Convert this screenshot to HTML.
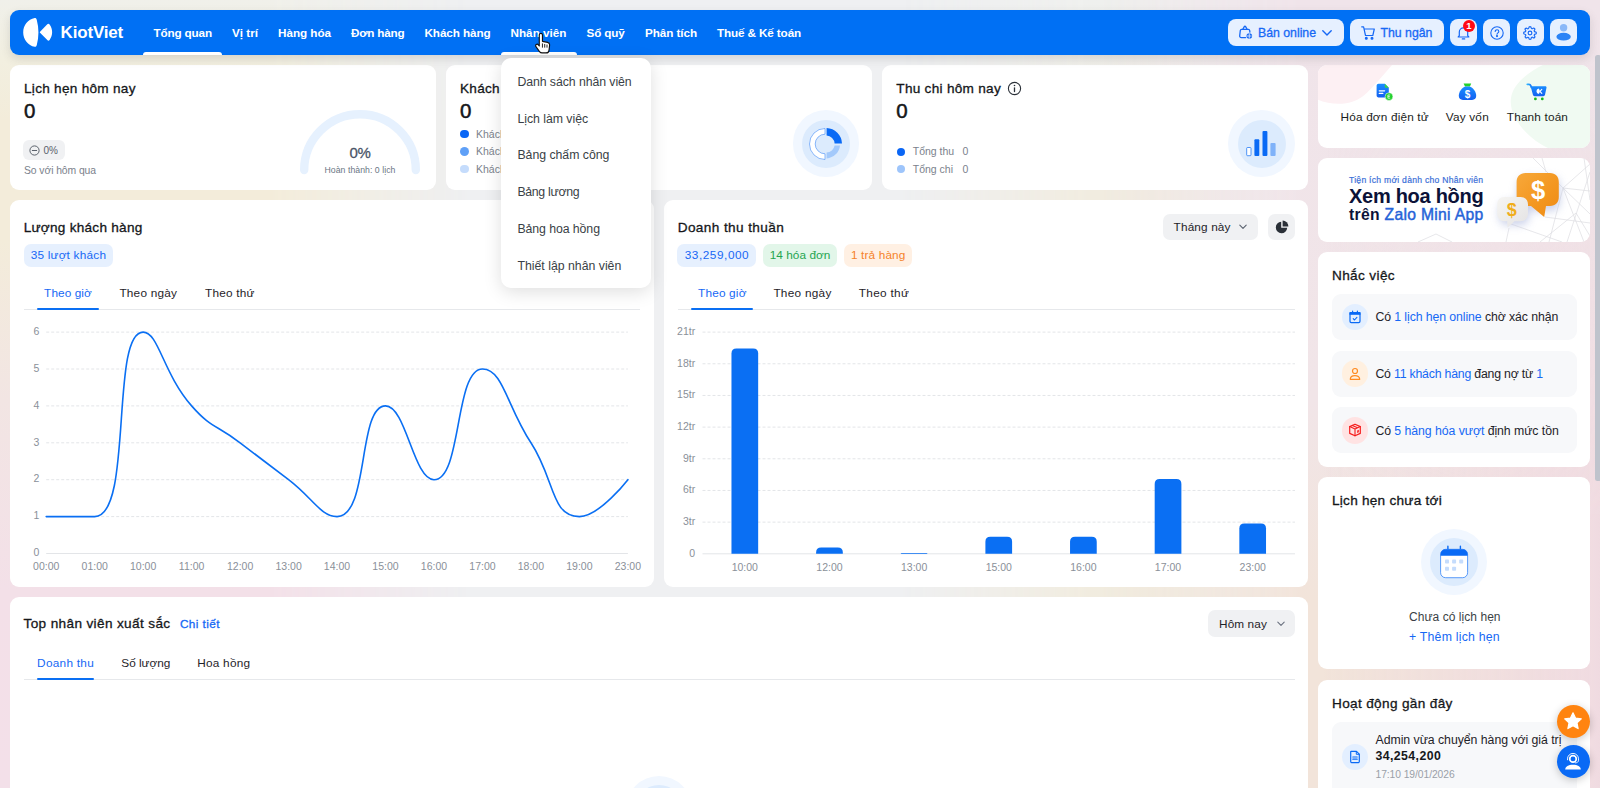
<!DOCTYPE html><html lang="vi"><head>
<meta charset="utf-8">
<title>KiotViet - Tổng quan</title>
<style>
*{box-sizing:border-box;margin:0;padding:0}
html,body{width:1600px;height:788px;overflow:hidden}
body{font-family:"Liberation Sans",sans-serif;color:#15171a;position:relative;
  background:#eff0f2;}

.bgL{position:absolute;left:0;top:0;width:470px;height:788px;background:linear-gradient(180deg,#f0f0ea 0,#f2efe0 60px,#f3ecda 120px,#f3ecda 240px,#f2e5e3 400px,#f3e0e8 590px,#f3e0e9 788px);-webkit-mask-image:linear-gradient(90deg,#000 0,#000 270px,transparent 100%);mask-image:linear-gradient(90deg,#000 0,#000 270px,transparent 100%)}
.bgC{position:absolute;left:900px;top:0;width:420px;height:788px;background:linear-gradient(180deg,#eff0ee 0,#f1ece0 190px,#f1ecdf 788px);-webkit-mask-image:linear-gradient(90deg,transparent 0,#000 45%,#000 60%,transparent 100%);mask-image:linear-gradient(90deg,transparent 0,#000 45%,#000 60%,transparent 100%)}
.bgR{position:absolute;left:1100px;top:0;width:500px;height:788px;background:linear-gradient(180deg,#f0e4ea 0,#f1e5e8 400px,#f2e4da 600px,#f2e4da 788px);-webkit-mask-image:linear-gradient(90deg,transparent 0,#000 200px);mask-image:linear-gradient(90deg,transparent 0,#000 200px)}
.bgP{position:absolute;left:1320px;top:0;width:280px;height:788px;background:linear-gradient(90deg,rgba(240,219,225,0) 0,#f0dbe1 100%);-webkit-mask-image:linear-gradient(180deg,transparent 60px,#000 520px);mask-image:linear-gradient(180deg,transparent 60px,#000 520px)}
.abs{position:absolute}
.card{position:absolute;background:#fff;border-radius:9px}
.t{position:absolute;white-space:nowrap;line-height:1}
.m{-webkit-text-stroke:.3px currentColor}
/* NAV */
#nav{position:absolute;left:10px;top:10px;width:1580px;height:45px;background:#0070f4;border-radius:9px;box-shadow:0 4px 10px rgba(60,60,60,.15)}
#nav .ni{position:absolute;top:0;height:45px;line-height:45px;color:#fff;font-weight:700;font-size:11.7px;white-space:nowrap}
#nav .ul{position:absolute;top:42px;height:3px;background:#fff;border-radius:3px 3px 0 0}
.nb{position:absolute;top:9px;height:27px;background:#e6f0ff;border-radius:8px;color:#1668f5}
/* dropdown */
#dd{position:absolute;left:501px;top:58px;width:150px;height:230px;background:#fff;border-radius:10px;box-shadow:0 4px 18px rgba(0,0,0,.13)}
#dd .t{color:#3a3f46}
.tab{position:absolute;font-size:12.3px;white-space:nowrap;line-height:1}
.pill{position:absolute;height:23px;border-radius:7px;font-size:12.3px;line-height:23px;text-align:center;white-space:nowrap}
.ax{font-size:10.5px;fill:#8a9099;font-family:"Liberation Sans",sans-serif}
</style>
</head>
<body>
<div class="bgL"></div><div class="bgC"></div><div class="bgR"></div><div class="bgP"></div>
<!-- ROW 1 -->
<div class="card" style="left:10px;top:65px;width:426px;height:125px">
<div class="t m" style="top: 17px; font-size: 13.6px; left: 14px; letter-spacing: 0.28px;">Lịch hẹn hôm nay</div>
<div class="t m" style="top:36px;font-size:20.5px;left:14.00px;-webkit-text-stroke:.5px currentColor;">0</div>
<div class="abs" style="left:13.2px;top:75px;width:42px;height:20px;background:#f0f1f3;border-radius:6px;"></div>
<svg class="abs" style="left:19.2px;top:79.6px" width="11" height="11" viewBox="0 0 11 11" fill="none" stroke="#5a616b" stroke-width="1"><circle cx="5.500" cy="5.500" r="4.600"></circle><path d="M3.300 5.500h4.400" stroke-linecap="round"></path></svg>
<div class="t" style="top: 81px; font-size: 10px; left: 33.6px; color: rgb(90, 97, 107); letter-spacing: -0.23px;">0%</div>
<div class="t" style="top: 101px; font-size: 10.4px; left: 14px; color: rgb(123, 130, 140); letter-spacing: -0.09px;">So với hôm qua</div>
<svg class="abs" style="left:280px;top:35px" width="140" height="90" viewBox="290 100 140 90" fill="none"><path d="M304.200 170A55.800 55.800 0 0 1 415.800 170" stroke="#e6f1fe" stroke-width="8.400" stroke-linecap="round"></path></svg>
<div class="t m" style="top: 80px; font-size: 15px; left: 339.5px; color: rgb(74, 85, 104); letter-spacing: -0.34px;">0%</div>
<div class="t" style="top: 101px; font-size: 8.7px; left: 314.5px; color: rgb(107, 118, 132); letter-spacing: 0.05px;">Hoàn thành: 0 lịch</div>
</div>
<div class="card" style="left:446px;top:65px;width:426px;height:125px">
<div class="t m" style="top:17px;font-size:13.6px;left:14.00px;letter-spacing:.28px;">Khách hàng hôm nay</div>
<div class="t m" style="top:36px;font-size:20.5px;left:14.00px;-webkit-text-stroke:.5px currentColor;">0</div>
<div class="abs" style="left:14.3px;top:64.7px;width:8.6px;height:8.6px;background:#0a66f5;border-radius:5px;"></div>
<div class="t" style="top:64px;font-size:10.5px;left:30.00px;color:#7b828c;">Khách mới &nbsp; 0</div>
<div class="abs" style="left:14.3px;top:82.2px;width:8.6px;height:8.6px;background:#5fa0f7;border-radius:5px;"></div>
<div class="t" style="top:81px;font-size:10.5px;left:30.00px;color:#7b828c;">Khách cũ &nbsp; 0</div>
<div class="abs" style="left:14.3px;top:99.7px;width:8.6px;height:8.6px;background:#c5dcfc;border-radius:5px;"></div>
<div class="t" style="top:99px;font-size:10.5px;left:30.00px;color:#7b828c;">Khách vãng lai &nbsp; 0</div>
<div class="abs" style="left:346.5px;top:45.4px;width:66.6px;height:66.6px;background:#f1f7ff;border-radius:40px;"></div>
<div class="abs" style="left:355.8px;top:54.7px;width:48px;height:48px;background:#dcebfd;border-radius:40px;"></div>
<svg class="abs" style="left:359.79999999999995px;top:58.80000000000001px" width="40" height="40" viewBox="-20 -20 40 40"><path d="M-1 -15.500A15.500 15.500 0 0 0 -1 15.500V9.800A9.800 9.800 0 0 1 -1 -9.800Z" fill="#fff" stroke="#3f8af7" stroke-width=".6"></path><path d="M.6 -16A16 16 0 0 1 16 -.6H8.600A8.600 8.600 0 0 0 .6 -8.600Z" fill="#0a6af5"></path><path d="M.6 14.400A14.400 14.400 0 0 0 14 1.400H8.600A8.600 8.600 0 0 1 .6 8.600Z" fill="#a3c9fb"></path></svg>
</div>
<div class="card" style="left:882px;top:65px;width:426px;height:125px">
<div class="t m" style="top: 17px; font-size: 13.6px; left: 14.3px; letter-spacing: 0.28px;">Thu chi hôm nay</div>
<svg class="abs" style="left:125.100px;top:16.300px" width="15" height="15" viewBox="0 0 15 15" fill="none" stroke="#2a3038" stroke-width="1.100"><circle cx="7.500" cy="7.500" r="6.100"></circle><path d="M7.500 6.800v3.800" stroke-linecap="round" stroke-width="1.300"></path><circle cx="7.500" cy="4.500" r=".8" fill="#2a3038" stroke="none"></circle></svg>
<div class="t m" style="top:36px;font-size:20.5px;left:14.30px;-webkit-text-stroke:.5px currentColor;">0</div>
<div class="abs" style="left:14.7px;top:82.50000000000001px;width:8.6px;height:8.6px;background:#0a66f5;border-radius:5px;"></div>
<div class="t" style="top: 81px; font-size: 10.5px; left: 30.8px; color: rgb(123, 130, 140); letter-spacing: -0.03px;">Tổng thu</div>
<div class="t" style="top:81px;font-size:10.5px;left:80.50px;color:#7b828c;">0</div>
<div class="abs" style="left:14.7px;top:99.90000000000002px;width:8.6px;height:8.6px;background:#9ec5fb;border-radius:5px;"></div>
<div class="t" style="top: 99px; font-size: 10.5px; left: 30.8px; color: rgb(123, 130, 140); letter-spacing: -0.01px;">Tổng chi</div>
<div class="t" style="top:99px;font-size:10.5px;left:80.50px;color:#7b828c;">0</div>
<div class="abs" style="left:346.3px;top:45.4px;width:66.6px;height:66.6px;background:#f1f7ff;border-radius:40px;"></div>
<div class="abs" style="left:355.6px;top:54.7px;width:48px;height:48px;background:#dcebfd;border-radius:40px;"></div>
<svg class="abs" style="left:359.6px;top:58.7px" width="40" height="40" viewBox="1241.600 122.900 40 40"><rect x="1246.300" y="146.400" width="4.300" height="8.200" rx=".8" fill="#fff" stroke="#0a6af5" stroke-width=".7"></rect><rect x="1254" y="138.100" width="4.900" height="16.800" rx="1" fill="#0a6af5"></rect><rect x="1262.100" y="130" width="4.900" height="24.900" rx="1" fill="#0a6af5"></rect><rect x="1270" y="142" width="5.200" height="12.900" rx="1" fill="#7fb2f9"></rect></svg>
</div>
<!-- ROW 2 -->
<div class="card" style="left:10px;top:200px;width:644px;height:387px">
<div class="t m" style="top: 21px; font-size: 13.6px; left: 13.65px; letter-spacing: 0.26px;">Lượng khách hàng</div>
<div class="abs" style="left:13.5px;top:43.80000000000001px;width:89.75px;height:23px;background:#e6f0fe;border-radius:7px;"></div>
<div class="t" style="top: 50px; font-size: 11.8px; left: 20.65px; color: rgb(22, 104, 245); letter-spacing: 0.22px;">35 lượt khách</div>
<div class="t" style="top: 88px; font-size: 11.8px; left: 34.1px; color: rgb(22, 104, 245); letter-spacing: 0.09px;">Theo giờ</div>
<div class="t" style="top: 88px; font-size: 11.8px; left: 109.4px; color: rgb(31, 35, 41); letter-spacing: 0.22px;">Theo ngày</div>
<div class="t" style="top: 88px; font-size: 11.8px; left: 195.1px; color: rgb(31, 35, 41); letter-spacing: 0.2px;">Theo thứ</div>
<div class="abs" style="left:13.5px;top:109.30000000000001px;width:616.5px;height:1px;background:#e6e8eb;border-radius:0px;"></div>
<div class="abs" style="left:26.799999999999997px;top:107.80000000000001px;width:62.10000000000001px;height:2.3px;background:#0a6ff3;border-radius:1px;"></div>
<svg class="abs" style="left:0;top:0" width="644" height="387" viewBox="10 200 644 387">
<path d="M46.2 553.5H627.9" stroke="#e3e5e8" stroke-width="1"></path><text class="ax" x="39.400" y="556.2" text-anchor="end">0</text>
<path d="M46.2 516.6H627.9" stroke="#e3e5e8" stroke-width="1" stroke-dasharray="3 2"></path><text class="ax" x="39.400" y="519.3" text-anchor="end">1</text>
<path d="M46.2 479.7H627.9" stroke="#e3e5e8" stroke-width="1" stroke-dasharray="3 2"></path><text class="ax" x="39.400" y="482.4" text-anchor="end">2</text>
<path d="M46.2 442.8H627.9" stroke="#e3e5e8" stroke-width="1" stroke-dasharray="3 2"></path><text class="ax" x="39.400" y="445.5" text-anchor="end">3</text>
<path d="M46.2 405.9H627.9" stroke="#e3e5e8" stroke-width="1" stroke-dasharray="3 2"></path><text class="ax" x="39.400" y="408.6" text-anchor="end">4</text>
<path d="M46.2 369.0H627.9" stroke="#e3e5e8" stroke-width="1" stroke-dasharray="3 2"></path><text class="ax" x="39.400" y="371.7" text-anchor="end">5</text>
<path d="M46.2 332.1H627.9" stroke="#e3e5e8" stroke-width="1" stroke-dasharray="3 2"></path><text class="ax" x="39.400" y="334.8" text-anchor="end">6</text>
<text class="ax" x="46.2" y="570.200" text-anchor="middle">00:00</text><text class="ax" x="94.7" y="570.200" text-anchor="middle">01:00</text><text class="ax" x="143.1" y="570.200" text-anchor="middle">10:00</text><text class="ax" x="191.6" y="570.200" text-anchor="middle">11:00</text><text class="ax" x="240.1" y="570.200" text-anchor="middle">12:00</text><text class="ax" x="288.6" y="570.200" text-anchor="middle">13:00</text><text class="ax" x="337.0" y="570.200" text-anchor="middle">14:00</text><text class="ax" x="385.5" y="570.200" text-anchor="middle">15:00</text><text class="ax" x="434.0" y="570.200" text-anchor="middle">16:00</text><text class="ax" x="482.5" y="570.200" text-anchor="middle">17:00</text><text class="ax" x="530.9" y="570.200" text-anchor="middle">18:00</text><text class="ax" x="579.4" y="570.200" text-anchor="middle">19:00</text><text class="ax" x="627.9" y="570.200" text-anchor="middle">23:00</text>
<path d="M46.20 516.60C46.20 516.60 84.85 516.60 94.67 516.60C133.33 516.60 110.01 332.10 143.15 332.10C158.49 332.10 162.94 373.15 191.62 405.90C211.42 428.50 215.86 424.35 240.10 442.80C264.34 461.25 264.34 461.25 288.57 479.70C312.81 498.15 320.80 516.60 337.05 516.60C369.28 516.60 357.52 405.90 385.52 405.90C405.99 405.90 413.53 479.70 434.00 479.70C462.01 479.70 454.47 369.00 482.47 369.00C502.94 369.00 506.71 405.90 530.95 442.80C555.19 479.70 550.74 516.60 579.42 516.60C599.22 516.60 627.90 479.70 627.90 479.70" fill="none" stroke="#0a6ff3" stroke-width="1.600" stroke-linecap="round"></path>
</svg>
</div>
<div class="card" style="left:664px;top:200px;width:644px;height:387px">
<div class="t m" style="top: 21px; font-size: 13.6px; left: 13.7px; letter-spacing: 0.4px;">Doanh thu thuần</div>
<div class="abs" style="left:13.299999999999955px;top:43.80000000000001px;width:78.4px;height:23px;background:#e6f0fe;border-radius:7px;"></div>
<div class="t" style="top: 50px; font-size: 11.8px; left: 20.75px; color: rgb(22, 104, 245); letter-spacing: 0.54px;">33,259,000</div>
<div class="abs" style="left:98.70000000000005px;top:43.80000000000001px;width:74.7px;height:23px;background:#e2f6e9;border-radius:7px;"></div>
<div class="t" style="top: 50px; font-size: 11.8px; left: 105.7px; color: rgb(31, 165, 80); letter-spacing: 0.05px;">14 hóa đơn</div>
<div class="abs" style="left:180.39999999999998px;top:43.80000000000001px;width:67.6px;height:23px;background:#fff0e3;border-radius:7px;"></div>
<div class="t" style="top: 50px; font-size: 11.8px; left: 187px; color: rgb(245, 130, 42); letter-spacing: 0.14px;">1 trả hàng</div>
<div class="abs" style="left:498.5px;top:13.599999999999994px;width:95.7px;height:26.3px;background:#f0f1f3;border-radius:7px;"></div>
<div class="t" style="top: 22px; font-size: 11.8px; left: 509.6px; color: rgb(31, 35, 41); letter-spacing: 0.14px;">Tháng này</div>
<svg class="abs" style="left:574.7px;top:24.3px" width="8" height="6" viewBox="0 0 8 6" fill="none" stroke="#5b6370" stroke-width="1.100" stroke-linecap="round" stroke-linejoin="round"><path d="M.8 1.200L4 4.400 7.200 1.200"></path></svg>
<div class="abs" style="left:604.2px;top:13.599999999999994px;width:26.7px;height:26.3px;background:#f0f1f3;border-radius:7px;"></div>
<svg class="abs" style="left:610.7px;top:19.9px" width="14" height="14" viewBox="0 0 14 14" fill="#2a3038"><path d="M6.200 1.800A5.700 5.700 0 1 0 12.200 7.800H6.200Z"></path><path d="M7.600.6A5.800 5.800 0 0 1 13.400 6.400H7.600Z"></path></svg>
<div class="t" style="top: 88px; font-size: 11.8px; left: 34px; color: rgb(22, 104, 245); letter-spacing: 0.19px;">Theo giờ</div>
<div class="t" style="top: 88px; font-size: 11.8px; left: 109.4px; color: rgb(31, 35, 41); letter-spacing: 0.27px;">Theo ngày</div>
<div class="t" style="top: 88px; font-size: 11.8px; left: 194.8px; color: rgb(31, 35, 41); letter-spacing: 0.31px;">Theo thứ</div>
<div class="abs" style="left:13.5px;top:109.30000000000001px;width:617.5px;height:1px;background:#e6e8eb;border-radius:0px;"></div>
<div class="abs" style="left:27px;top:107.80000000000001px;width:62.200000000000045px;height:2.3px;background:#0a6ff3;border-radius:1px;"></div>
<svg class="abs" style="left:0;top:0" width="644" height="387" viewBox="664 200 644 387">
<path d="M702.5 553.8H1295" stroke="#e3e5e8" stroke-width="1"></path><text class="ax" x="695.200" y="556.7" text-anchor="end">0</text>
<path d="M702.5 522.13H1295" stroke="#e3e5e8" stroke-width="1" stroke-dasharray="3 2"></path><text class="ax" x="695.200" y="525.0" text-anchor="end">3tr</text>
<path d="M702.5 490.4599999999999H1295" stroke="#e3e5e8" stroke-width="1" stroke-dasharray="3 2"></path><text class="ax" x="695.200" y="493.4" text-anchor="end">6tr</text>
<path d="M702.5 458.78999999999996H1295" stroke="#e3e5e8" stroke-width="1" stroke-dasharray="3 2"></path><text class="ax" x="695.200" y="461.7" text-anchor="end">9tr</text>
<path d="M702.5 427.11999999999995H1295" stroke="#e3e5e8" stroke-width="1" stroke-dasharray="3 2"></path><text class="ax" x="695.200" y="430.0" text-anchor="end">12tr</text>
<path d="M702.5 395.44999999999993H1295" stroke="#e3e5e8" stroke-width="1" stroke-dasharray="3 2"></path><text class="ax" x="695.200" y="398.3" text-anchor="end">15tr</text>
<path d="M702.5 363.78H1295" stroke="#e3e5e8" stroke-width="1" stroke-dasharray="3 2"></path><text class="ax" x="695.200" y="366.7" text-anchor="end">18tr</text>
<path d="M702.5 332.10999999999996H1295" stroke="#e3e5e8" stroke-width="1" stroke-dasharray="3 2"></path><text class="ax" x="695.200" y="335.0" text-anchor="end">21tr</text>
<path d="M731.47 553.8V353.60Q731.47 348.60 736.47 348.60H753.17Q758.17 348.60 758.17 353.60V553.8Z" fill="#0a6ff3"></path><text class="ax" x="744.8" y="570.600" text-anchor="middle">10:00</text>
<path d="M816.11 553.8V552.40Q816.11 547.40 821.11 547.40H837.81Q842.81 547.40 842.81 552.40V553.8Z" fill="#0a6ff3"></path><text class="ax" x="829.5" y="570.600" text-anchor="middle">12:00</text>
<path d="M900.76 553.8V553.80Q900.76 553.00 901.56 553.00H926.66Q927.46 553.00 927.46 553.80V553.8Z" fill="#0a6ff3"></path><text class="ax" x="914.1" y="570.600" text-anchor="middle">13:00</text>
<path d="M985.40 553.8V541.70Q985.40 536.70 990.40 536.70H1007.10Q1012.10 536.70 1012.10 541.70V553.8Z" fill="#0a6ff3"></path><text class="ax" x="998.8" y="570.600" text-anchor="middle">15:00</text>
<path d="M1070.04 553.8V541.70Q1070.04 536.70 1075.04 536.70H1091.74Q1096.74 536.70 1096.74 541.70V553.8Z" fill="#0a6ff3"></path><text class="ax" x="1083.4" y="570.600" text-anchor="middle">16:00</text>
<path d="M1154.69 553.8V483.90Q1154.69 478.90 1159.69 478.90H1176.39Q1181.39 478.90 1181.39 483.90V553.8Z" fill="#0a6ff3"></path><text class="ax" x="1168.0" y="570.600" text-anchor="middle">17:00</text>
<path d="M1239.33 553.8V528.50Q1239.33 523.50 1244.33 523.50H1261.03Q1266.03 523.50 1266.03 528.50V553.8Z" fill="#0a6ff3"></path><text class="ax" x="1252.7" y="570.600" text-anchor="middle">23:00</text>
</svg>
</div>
<!-- ROW 3 -->
<div class="card" style="left:10px;top:597px;width:1298px;height:191px;border-radius:9px 9px 0 0;overflow:hidden">
<div class="t m" style="top: 20px; font-size: 13.6px; left: 13.5px; letter-spacing: 0.36px;">Top nhân viên xuất sắc</div>
<div class="t m" style="top: 22px; font-size: 11.8px; left: 169.9px; color: rgb(22, 104, 245); letter-spacing: 0.41px;">Chi tiết</div>
<div class="abs" style="left:1198.3px;top:13.299999999999955px;width:86.7px;height:26.4px;background:#f0f1f3;border-radius:7px;"></div>
<div class="t" style="top: 22px; font-size: 11.8px; left: 1209px; color: rgb(31, 35, 41); letter-spacing: 0.11px;">Hôm nay</div>
<svg class="abs" style="left:1267.2px;top:24.1px" width="8" height="6" viewBox="0 0 8 6" fill="none" stroke="#6b7280" stroke-width="1.100" stroke-linecap="round" stroke-linejoin="round"><path d="M.8 1.200L4 4.400 7.200 1.200"></path></svg>
<div class="t" style="top: 61px; font-size: 11.8px; left: 27.1px; color: rgb(22, 104, 245); letter-spacing: 0.28px;">Doanh thu</div>
<div class="t" style="top: 61px; font-size: 11.8px; left: 111.3px; color: rgb(31, 35, 41); letter-spacing: -0.01px;">Số lượng</div>
<div class="t" style="top: 61px; font-size: 11.8px; left: 187.2px; color: rgb(31, 35, 41); letter-spacing: 0.25px;">Hoa hồng</div>
<div class="abs" style="left:13.5px;top:82.29999999999995px;width:1271.5px;height:1px;background:#e6e8eb;border-radius:0px;"></div>
<div class="abs" style="left:27px;top:80.79999999999995px;width:57px;height:2.3px;background:#0a6ff3;border-radius:1px;"></div>
<div class="abs" style="left:615.7px;top:178.7px;width:66.6px;height:66.6px;background:#f1f7ff;border-radius:40px;"></div>
<div class="abs" style="left:625px;top:188px;width:48px;height:48px;background:#dcebfd;border-radius:40px;"></div>
</div>
<!-- SIDEBAR -->
<div class="card" style="left:1318px;top:65px;width:272px;height:83px;overflow:hidden">
<svg class="abs" style="left:0;top:0" width="272" height="83" viewBox="1318 65 272 83"><path d="M1318 65H1392C1384 74 1376 84 1367 92.700C1360 99 1354 102 1346 103.200C1338 104.500 1326 103.500 1318 99.700Z" fill="#fdf0f3"></path><path d="M1590 65V148H1548C1530 140 1508 118 1511 98C1513 84 1528 72 1543 65Z" fill="#f0faf2"></path></svg>
<svg class="abs" style="left:56.5px;top:16.8px" width="20" height="20" viewBox="0 0 20 20"><defs><linearGradient id="gb" x1="0" y1="0" x2="0" y2="1"><stop offset="0" stop-color="#1a8cff"></stop><stop offset="1" stop-color="#1461f0"></stop></linearGradient></defs><path d="M3.500 1.800H9.800L13.800 5.800V13.500C13.800 14.600 13 15.400 11.900 15.400H3.500C2.400 15.400 1.600 14.600 1.600 13.500V3.700C1.600 2.600 2.400 1.800 3.500 1.800Z" fill="url(#gb)"></path><path d="M9.800 1.800L13.800 5.800H10.800C10.200 5.800 9.800 5.400 9.800 4.800Z" fill="#37d24a"></path><path d="M4.300 8.800H9.600M4.300 11.400H7.800" stroke="#fff" stroke-width="1.300" stroke-linecap="round"></path><circle cx="14" cy="14.600" r="3.900" fill="#22d02c" stroke="#fff" stroke-width=".5"></circle><path d="M12.900 13h2.300M12.900 14.600h2M12.900 16.200h2.300M12.900 13v3.200" stroke="#fff" stroke-width=".7" fill="none"></path></svg>
<div class="t" style="top: 47px; font-size: 11.8px; left: 22.6px; color: rgb(26, 29, 33); letter-spacing: 0.16px;">Hóa đơn điện tử</div>
<svg class="abs" style="left:140px;top:17px" width="20" height="20" viewBox="0 0 20 20"><path d="M5.600 1.500H13.200L11.900 4.600H7Z" fill="#22d02c"></path><path d="M7.300 4.500H11.700C14.800 5.500 18.200 9.600 18.200 13.800C18.200 16.500 16.700 17.900 14.100 17.900H4.900C2.300 17.900 .8 16.500 .8 13.800C.8 9.600 4.200 5.500 7.300 4.500Z" fill="url(#gb)"></path><text x="9.500" y="15.800" font-size="10" font-weight="700" fill="#fff" text-anchor="middle" font-family="Liberation Sans, sans-serif">$</text></svg>
<div class="t" style="top: 47px; font-size: 11.8px; left: 127.7px; color: rgb(26, 29, 33); letter-spacing: 0.21px;">Vay vốn</div>
<svg class="abs" style="left:208px;top:17px" width="22" height="20" viewBox="0 0 22 20"><defs><linearGradient id="gh" x1="0" y1="0" x2="1" y2="0"><stop offset="0" stop-color="#2fb4ff"></stop><stop offset="1" stop-color="#1a74f5"></stop></linearGradient></defs><path d="M1.300 2.300H2.900C3.900 2.300 4.500 2.800 4.800 3.700L5.400 5.500" stroke="url(#gh)" stroke-width="1.800" fill="none" stroke-linecap="round"></path><path d="M4.600 4.200H19.200C20.200 4.200 20.700 4.900 20.500 5.800L19 12.800C18.800 13.700 18.200 14.200 17.300 14.200H8.600C7.700 14.200 7.100 13.700 6.900 12.800Z" fill="url(#gb)"></path><path d="M12.600 6.500A2.900 2.900 0 0 0 12.600 12.100A4.200 4.200 0 0 0 12.600 6.500Z" fill="#fff"></path><path d="M15.800 7.300L13.900 9.300L15.800 11.300" stroke="#fff" stroke-width="1.100" fill="none" stroke-linecap="round" stroke-linejoin="round"></path><circle cx="9.400" cy="16.900" r="1.400" fill="#14b81e"></circle><circle cx="16.300" cy="16.900" r="1.400" fill="#14b81e"></circle></svg>
<div class="t" style="top: 47px; font-size: 11.8px; left: 188.8px; color: rgb(26, 29, 33); letter-spacing: 0.16px;">Thanh toán</div>
</div>
<div class="card" style="left:1318px;top:158px;width:272px;height:84px;overflow:hidden">
<svg class="abs" style="left:0;top:0" width="272" height="84" viewBox="1318 158 272 84"><defs><linearGradient id="og" x1="0" y1="0" x2="1" y2="1"><stop offset="0" stop-color="#f7a83a"></stop><stop offset=".6" stop-color="#f3961f"></stop><stop offset="1" stop-color="#ee8a14"></stop></linearGradient><linearGradient id="wg" x1="0" y1="0" x2="1" y2="1"><stop offset="0" stop-color="#f6f5f2"></stop><stop offset="1" stop-color="#e4e3e4"></stop></linearGradient><filter id="bsh" x="-40%" y="-40%" width="180%" height="180%"><feGaussianBlur stdDeviation="4.500"></feGaussianBlur></filter></defs><path d="M1533 158L1563 188L1590 214" stroke="#dcdde1" stroke-width=".7" fill="none"></path><path d="M1590 164L1563 188L1549 242" stroke="#dcdde1" stroke-width=".7" fill="none"></path><path d="M1563 188L1590 191" stroke="#dcdde1" stroke-width=".7" fill="none"></path><path d="M1563 188L1584 242" stroke="#dcdde1" stroke-width=".7" fill="none"></path><path d="M1542 158L1546 172" stroke="#dcdde1" stroke-width=".7" fill="none"></path><path d="M1511 224L1562 242" stroke="#dcdde1" stroke-width=".7" fill="none"></path><path d="M1545 217L1590 223" stroke="#dcdde1" stroke-width=".7" fill="none"></path><path d="M1590 172L1567 242" stroke="#dcdde1" stroke-width=".7" fill="none"></path><path d="M1540 242L1576 213L1590 236" stroke="#dcdde1" stroke-width=".7" fill="none"></path><path d="M1509 228L1506 242" stroke="#dcdde1" stroke-width=".7" fill="none"></path><path d="M1584 158L1590 200" stroke="#dcdde1" stroke-width=".7" fill="none"></path><path d="M1418 242L1436 234L1452 242" stroke="#dcdde1" stroke-width=".7" fill="none"></path><g filter="url(#bsh)" opacity=".75"><rect x="1518" y="177" width="42" height="34" rx="9" fill="#b9c2e3"></rect><rect x="1499" y="201" width="30" height="24" rx="8" fill="#b9c2e3"></rect></g><path d="M1525.500 173H1550C1555.500 173 1558.800 176.500 1558.800 182V197C1558.800 202.500 1555.500 206 1550 206H1546L1544.200 217L1531 206H1525.500C1520 206 1516.600 202.500 1516.600 197V182C1516.600 176.500 1520 173 1525.500 173Z" fill="url(#og)"></path><text x="1538.200" y="198.500" font-size="25.500" font-weight="700" fill="#fff" text-anchor="middle" font-family="Liberation Sans, sans-serif">$</text><path d="M1504.500 197H1520.500C1525 197 1528 200 1528 204.500V213.500C1528 218 1525 221.200 1520.500 221.200H1514.500L1507.600 227.500L1507.200 221.200H1504.500C1500 221.200 1497.200 218 1497.200 213.500V204.500C1497.200 200 1500 197 1504.500 197Z" fill="url(#wg)"></path><text x="1511.700" y="216.300" font-size="18" font-weight="700" fill="#f0ae1c" text-anchor="middle" font-family="Liberation Sans, sans-serif">$</text></svg>
<div class="t" style="top: 18px; font-size: 8.6px; left: 31px; color: rgb(59, 111, 216); -webkit-text-stroke: 0.2px rgb(59, 111, 216); letter-spacing: 0.26px;">Tiện ích mới dành cho Nhân viên</div>
<div class="t" style="top: 28px; font-size: 20px; left: 31px; color: rgb(11, 18, 56); font-weight: 700; letter-spacing: -0.28px;">Xem hoa hồng</div>
<div class="t" style="top: 49px; font-size: 15.7px; left: 31px; color: rgb(11, 18, 56); font-weight: 700; letter-spacing: 0.3px;">trên <span style="color:#2563d8;font-weight:400;-webkit-text-stroke:.45px #2563d8">Zalo Mini App</span></div>
</div>
<div class="card" style="left:1318px;top:252px;width:272px;height:214.500px">
<div class="t m" style="top: 17px; font-size: 13.6px; left: 14px; letter-spacing: 0.37px;">Nhắc việc</div>
<div class="abs" style="left:14.200000000000045px;top:42px;width:244.4px;height:46px;background:#f7f8fa;border-radius:9px;"></div>
<div class="abs" style="left:23.5px;top:51.69999999999999px;width:26.6px;height:26.6px;background:#e3efff;border-radius:14px;"></div>
<svg class="abs" style="left:28.8px;top:57.0px" width="16" height="16" viewBox="0 0 16 16" fill="none" stroke-linecap="round" stroke-linejoin="round"><rect x="3" y="3.600" width="10" height="10" rx="1.300" stroke="#0a6af5" stroke-width="1.200"></rect><path d="M3 3.600H13V5.200H3Z" fill="#0a6af5" stroke="#0a6af5" stroke-width="1.200"></path><path d="M5.600 2.200V4M10.400 2.200V4" stroke="#0a6af5" stroke-width="1.200"></path><path d="M6.200 9.700L7.500 11L9.900 8.400" stroke="#0a6af5" stroke-width="1.100"></path></svg>
<div class="t" style="top: 59px; font-size: 12.3px; left: 57.4px; color: rgb(31, 35, 41); letter-spacing: -0.09px;">Có <span style="color:#1668f5">1 lịch hẹn online</span> chờ xác nhận</div>
<div class="abs" style="left:14.200000000000045px;top:98.5px;width:244.4px;height:46px;background:#f7f8fa;border-radius:9px;"></div>
<div class="abs" style="left:23.5px;top:108.19999999999999px;width:26.6px;height:26.6px;background:#fff0e0;border-radius:14px;"></div>
<svg class="abs" style="left:28.8px;top:113.5px" width="16" height="16" viewBox="0 0 16 16" fill="none" stroke-linecap="round" stroke-linejoin="round"><circle cx="8" cy="5" r="2.500" stroke="#ff8a1f" stroke-width="1.200"></circle><path d="M3.300 13.300C3.300 10.900 5.300 9.600 8 9.600S12.700 10.900 12.700 13.300Z" stroke="#ff8a1f" stroke-width="1.200"></path></svg>
<div class="t" style="top: 116px; font-size: 12.3px; left: 57.4px; color: rgb(31, 35, 41); letter-spacing: -0.2px;">Có <span style="color:#1668f5">11 khách hàng</span> đang nợ từ <span style="color:#1668f5">1</span></div>
<div class="abs" style="left:14.200000000000045px;top:155.3px;width:244.4px;height:46px;background:#f7f8fa;border-radius:9px;"></div>
<div class="abs" style="left:23.5px;top:165.0px;width:26.6px;height:26.6px;background:#ffe3e3;border-radius:14px;"></div>
<svg class="abs" style="left:28.8px;top:170.3px" width="16" height="16" viewBox="0 0 16 16" fill="none" stroke-linecap="round" stroke-linejoin="round"><path d="M8 2.200L13.300 4.600V11.400L8 13.800L2.700 11.400V4.600Z" stroke="#f51d1d" stroke-width="1.200"></path><path d="M2.700 4.600L8 7L13.300 4.600M8 7V13.800M5.300 3.400L10.600 5.800" stroke="#f51d1d" stroke-width="1.100"></path><path d="M10.200 8.500L11.800 7.800V10.200L10.200 10.900Z" fill="#f51d1d" stroke="none"></path></svg>
<div class="t" style="top: 173px; font-size: 12.3px; left: 57.4px; color: rgb(31, 35, 41); letter-spacing: -0.06px;">Có <span style="color:#1668f5">5 hàng hóa vượt</span> định mức tồn</div>
</div>
<div class="card" style="left:1318px;top:477px;width:272px;height:192.400px">
<div class="t m" style="top: 17px; font-size: 13.6px; left: 14px; letter-spacing: 0.25px;">Lịch hẹn chưa tới</div>
<div class="abs" style="left:102.7px;top:51.7px;width:66.6px;height:66.6px;background:#f1f7ff;border-radius:40px;"></div>
<div class="abs" style="left:112px;top:61px;width:48px;height:48px;background:#dcebfd;border-radius:40px;"></div>
<svg class="abs" style="left:116px;top:65.0px" width="40" height="40" viewBox="1434 542 40 40"><path d="M1447.900 546.300V550M1460.400 546.300V550" stroke="#0a6af5" stroke-width="1.400" stroke-linecap="round"></path><rect x="1440.600" y="549.300" width="27" height="28.400" rx="5" fill="#fff" stroke="#1a74f6" stroke-width=".7"></rect><path d="M1440.600 555.700V554.300A5 5 0 0 1 1445.600 549.300H1462.600A5 5 0 0 1 1467.600 554.300V555.700Z" fill="#0a6af5"></path><rect x="1445.0" y="559.6" width="4" height="4" rx=".8" fill="#c5dcfc"></rect><rect x="1452.1" y="559.6" width="4" height="4" rx=".8" fill="#c5dcfc"></rect><rect x="1459.2" y="559.6" width="4" height="4" rx=".8" fill="#c5dcfc"></rect><rect x="1445.0" y="566.8" width="4" height="4" rx=".8" fill="#c5dcfc"></rect><rect x="1452.1" y="566.8" width="4" height="4" rx=".8" fill="#c5dcfc"></rect></svg>
<div class="t" style="top: 134px; font-size: 12px; left: 91.05px; color: rgb(58, 63, 69); letter-spacing: 0.05px;">Chưa có lịch hẹn</div>
<div class="t" style="top: 154px; font-size: 12.3px; left: 91.05px; color: rgb(22, 104, 245); letter-spacing: 0.21px;">+ Thêm lịch hẹn</div>
</div>
<div class="card" style="left:1318px;top:680px;width:272px;height:108px;border-radius:9px 9px 0 0;overflow:hidden">
<div class="t m" style="top: 17px; font-size: 13.6px; left: 14px; letter-spacing: 0.34px;">Hoạt động gần đây</div>
<div class="abs" style="left:14.200000000000045px;top:41.5px;width:244.4px;height:80px;background:#f7f8fa;border-radius:9px;"></div>
<div class="abs" style="left:24px;top:63.5px;width:26px;height:26px;background:#e3efff;border-radius:13px;"></div>
<svg class="abs" style="left:29.0px;top:68.5px" width="16" height="16" viewBox="0 0 16 16" fill="none" stroke-linecap="round" stroke-linejoin="round"><path d="M4 2.300H9.500L12.300 5.100V12.600C12.300 13.200 11.900 13.700 11.300 13.700H4.700C4.100 13.700 3.700 13.200 3.700 12.600V2.600Z" stroke="#0a6af5" stroke-width="1.200"></path><path d="M5.800 8H10.200M5.800 10.200H10.200" stroke="#0a6af5" stroke-width="1.200"></path><path d="M9.300 2.500V5.300H12" stroke="#0a6af5" stroke-width="1"></path></svg>
<div class="t" style="top: 54px; font-size: 12.3px; left: 57.5px; color: rgb(31, 35, 41); letter-spacing: -0.04px;">Admin vừa chuyển hàng với giá trị</div>
<div class="t" style="top: 70px; font-size: 12.3px; left: 57.5px; color: rgb(21, 23, 26); font-weight: 700; letter-spacing: 0.41px;">34,254,200</div>
<div class="t" style="top: 90px; font-size: 10.3px; left: 57.5px; color: rgb(154, 160, 168); letter-spacing: -0.07px;">17:10 19/01/2026</div>
</div>
<!-- NAVBAR -->
<div id="nav">
<svg class="abs" style="left:0;top:0" width="60" height="45" viewBox="10 10 60 45"><path fill="#fff" d="M34.7 18.1C28 19.5 23.2 25.5 23.2 32.4c0 7 4.8 12.9 11.5 14.4 1 .1 1.700-.4 2.100-1.800 2.200-8 2.200-17 0-25-.4-1.400-1.100-2-2.100-1.900z"></path><path fill="#fff" d="M40.300 31.400l7-7.100c.8-.8 1.700-.7 2.300.2 3.400 4.700 3.400 10.700 0 15.400-.6.900-1.500 1-2.300.2l-7-7c-.6-.6-.6-1.100 0-1.700z"></path></svg>
<div class="t" id="brand" style="left: 50.6px; top: 14.1px; font-size: 17px; font-weight: 700; color: rgb(255, 255, 255); letter-spacing: -0.19px;">KiotViet</div>
<div class="ni" style="left: 143.5px; letter-spacing: -0.14px;">Tổng quan</div>
<div class="ni" style="left: 222px; letter-spacing: 0px;">Vị trí</div>
<div class="ni" style="left: 268px; letter-spacing: -0.03px;">Hàng hóa</div>
<div class="ni" style="left: 341px; letter-spacing: -0.2px;">Đơn hàng</div>
<div class="ni" style="left: 414.5px; letter-spacing: -0.09px;">Khách hàng</div>
<div class="ni" style="left: 500.5px; letter-spacing: 0.02px;">Nhân viên</div>
<div class="ni" style="left: 576.5px; letter-spacing: -0.16px;">Sổ quỹ</div>
<div class="ni" style="left: 635px; letter-spacing: -0.07px;">Phân tích</div>
<div class="ni" style="left: 707px; letter-spacing: -0.12px;">Thuế &amp; Kế toán</div>
<div class="ul" style="left:133px;width:79px"></div>
<div class="ul" style="left:491px;width:76px"></div>
<div class="nb" style="left:1218px;width:116px">
<svg class="abs" style="left:10px;top:6px" width="16" height="15" viewBox="0 0 16 15" fill="none" stroke="#1668f5" stroke-width="1.3" stroke-linecap="round" stroke-linejoin="round"><path d="M7.6 12.600H3.300c-1 0-1.700-.8-1.600-1.800l.6-5.300c.1-.7.600-1.100 1.300-1.100h6.800c.7 0 1.200.4 1.300 1.100l.2 1.700"></path><path d="M4.800 4.300l1.500-2.700c.3-.5 1-.5 1.300 0l1.500 2.700"></path><circle cx="11.300" cy="11" r="2.800" fill="#1668f5" stroke="none"></circle><path d="M11.300 8.800v4.400M9.300 11h4" stroke="#e6f0ff" stroke-width=".8"></path></svg>
<div class="t m" style="left: 30px; top: 7.8px; font-size: 12.3px; letter-spacing: -0.01px;">Bán online</div>
<svg class="abs" style="left:94px;top:10.500px" width="10" height="6" viewBox="0 0 10 6" fill="none" stroke="#1668f5" stroke-width="1.400" stroke-linecap="round" stroke-linejoin="round"><path d="M.8.800L5 5 9.200.8"></path></svg>
</div>
<div class="nb" style="left:1340px;width:93.500px">
<svg class="abs" style="left:10.500px;top:6.500px" width="15" height="14" viewBox="0 0 15 14" fill="none" stroke="#1668f5" stroke-width="1.200" stroke-linecap="round" stroke-linejoin="round"><path d="M.7.800h1.900l1.900 8.700h7.300l1.500-6.500H3.200"></path><circle cx="5.300" cy="12.300" r=".9" fill="#1668f5"></circle><circle cx="11" cy="12.300" r=".9" fill="#1668f5"></circle></svg>
<div class="t m" style="left: 30.5px; top: 7.8px; font-size: 12.3px; letter-spacing: 0px;">Thu ngân</div>
</div>
<div class="nb" style="left:1440px;width:27px">
<svg class="abs" style="left:7px;top:7px" width="13" height="14" viewBox="0 0 13 14" fill="none" stroke="#1668f5" stroke-width="1.200" stroke-linecap="round" stroke-linejoin="round"><path d="M2.300 9.700V6.100c0-2.400 1.800-4.300 4.200-4.300s4.200 1.900 4.200 4.300v3.600l1.100 1.300H1.200z"></path><path d="M5.300 12.900h2.400"></path></svg>
<div class="abs" style="left:13px;top:1px;width:12px;height:12px;border-radius:50%;background:#ff0a14;color:#fff;font-size:9.500px;font-weight:700;line-height:12px;text-align:center">1</div>
</div>
<div class="nb" style="left:1473px;width:27px">
<svg class="abs" style="left:6.500px;top:6.500px" width="14" height="14" viewBox="0 0 14 14" fill="none" stroke="#1668f5" stroke-width="1.100" stroke-linecap="round" stroke-linejoin="round"><circle cx="7" cy="7" r="6.200"></circle><path d="M5.200 5.500c0-1 .8-1.700 1.800-1.700s1.800.7 1.800 1.700c0 1.300-1.800 1.400-1.800 2.700"></path><circle cx="7" cy="10.100" r=".5" fill="#1668f5"></circle></svg>
</div>
<div class="nb" style="left:1506.500px;width:27px">
<svg class="abs" style="left:6.500px;top:6.500px" width="14" height="14" viewBox="0 0 24 24" fill="none" stroke="#1668f5" stroke-width="2" stroke-linecap="round" stroke-linejoin="round"><circle cx="12" cy="12" r="3.200"></circle><path d="M19.400 15a1.650 1.650 0 0 0 .33 1.820l.06.060a2 2 0 1 1-2.830 2.830l-.06-.06a1.650 1.650 0 0 0-1.820-.33 1.650 1.650 0 0 0-1 1.510V21a2 2 0 1 1-4 0v-.09A1.650 1.650 0 0 0 9 19.400a1.650 1.650 0 0 0-1.820.33l-.06.060a2 2 0 1 1-2.830-2.830l.06-.06a1.650 1.650 0 0 0 .33-1.820 1.650 1.650 0 0 0-1.510-1H3a2 2 0 1 1 0-4h.09A1.650 1.650 0 0 0 4.600 9a1.650 1.650 0 0 0-.33-1.820l-.06-.06a2 2 0 1 1 2.830-2.830l.06.060a1.650 1.650 0 0 0 1.820.33H9a1.650 1.650 0 0 0 1-1.510V3a2 2 0 1 1 4 0v.09a1.650 1.650 0 0 0 1 1.510 1.650 1.650 0 0 0 1.820-.33l.06-.06a2 2 0 1 1 2.830 2.830l-.06.060a1.650 1.650 0 0 0-.33 1.820V9a1.650 1.650 0 0 0 1.510 1H21a2 2 0 1 1 0 4h-.09a1.650 1.650 0 0 0-1.510 1z"></path></svg>
</div>
<div class="nb" style="left:1540px;width:27px;overflow:hidden">
<svg class="abs" style="left:0;top:0" width="27" height="27" viewBox="0 0 27 27"><circle cx="13.600" cy="8.800" r="3.700" fill="#8ab8f8"></circle><ellipse cx="13.600" cy="17.700" rx="7.200" ry="3.900" fill="#2b83f6"></ellipse></svg>
</div>
</div>
<!-- OVERLAYS -->
<div id="dd">
<div class="t" style="top: 18px; font-size: 12.3px; left: 16.4px; letter-spacing: -0.07px;">Danh sách nhân viên</div>
<div class="t" style="top: 55px; font-size: 12.3px; left: 16.4px; letter-spacing: -0.03px;">Lịch làm việc</div>
<div class="t" style="top: 91px; font-size: 12.3px; left: 16.4px; letter-spacing: -0.02px;">Bảng chấm công</div>
<div class="t" style="top: 128px; font-size: 12.3px; left: 16.4px; letter-spacing: -0.3px;">Bảng lương</div>
<div class="t" style="top: 165px; font-size: 12.3px; left: 16.4px; letter-spacing: -0.07px;">Bảng hoa hồng</div>
<div class="t" style="top: 202px; font-size: 12.3px; left: 16.4px; letter-spacing: 0px;">Thiết lập nhân viên</div>
</div>
<div class="abs" style="left:1556.8px;top:704.9px;width:33.2px;height:33.2px;background:#ff8410;border-radius:17px;box-shadow:0 2px 8px rgba(0,0,0,.22);"></div>
<svg class="abs" style="left:1563.400px;top:711px" width="20" height="20" viewBox="0 0 20 20"><path d="M10 1.800L12.500 7.100L18.300 7.800L14 11.800L15.100 17.600L10 14.700L4.900 17.600L6 11.800L1.700 7.800L7.500 7.100Z" fill="#fff" stroke="#fff" stroke-width="1.200" stroke-linejoin="round"></path></svg>
<div class="abs" style="left:1556.8px;top:744.7px;width:33.2px;height:33.2px;background:#0a6af5;border-radius:17px;box-shadow:0 2px 8px rgba(0,0,0,.22);"></div>
<svg class="abs" style="left:1562.400px;top:750.300px" width="22" height="22" viewBox="0 0 22 22" fill="none"><circle cx="11" cy="8.900" r="3.300" stroke="#fff" stroke-width="1.700"></circle><path d="M5.500 10.200V8.900A5.500 5.500 0 0 1 16.500 8.900V10.200C16.500 12 15.100 12.900 13 12.900" stroke="#fff" stroke-width=".9"></path><path d="M3.200 19.600C3.200 16.500 6.500 14.800 11 14.800S18.800 16.500 18.800 19.600Z" fill="#fff"></path></svg>
<div class="abs" style="left:1595px;top:55px;width:5.5px;height:426px;background:#bfc3cc;border-radius:0px;border-radius:2.5px;"></div>
<svg class="abs" style="left:532.900px;top:32.900px" width="20.500" height="22.800" viewBox="0 0 18 20"><path d="M5.500 1.800C5.500 .9 6.200 .4 6.900 .4S8.300 .9 8.300 1.800V7.300L12.800 8.200C14 8.500 14.700 9.300 14.600 10.500L14.100 15C14 16.500 13 17.500 11.500 17.500H8C7 17.500 6.300 17.100 5.700 16.300L2.600 12C2.100 11.300 2.300 10.500 2.900 10.100C3.500 9.700 4.200 9.800 4.700 10.400L5.500 11.400Z" fill="#fff" stroke="#111" stroke-width="1" stroke-linejoin="round"></path><path d="M8.300 9.500V12.500M10.300 10V12.500M12.300 10.500V12.500" stroke="#111" stroke-width=".8" stroke-linecap="round"></path></svg>


</body></html>
